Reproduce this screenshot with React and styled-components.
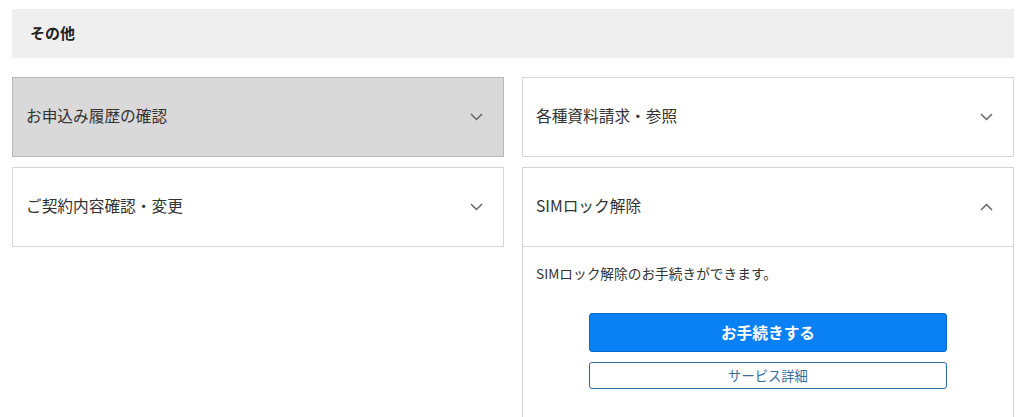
import React from 'react';
import styled, { createGlobalStyle } from 'styled-components';

const GlobalStyle = createGlobalStyle`
  body {
    margin: 0;
    background: #fff;
    font-family: "Noto Sans CJK JP", "Liberation Sans", sans-serif;
    color: #333;
  }
`;

const Page = styled.div`
  padding: 9px 10px 0 12px;
`;

const SectionHead = styled.h2`
  margin: 0;
  height: 49px;
  box-sizing: border-box;
  display: flex;
  align-items: center;
  padding: 0 18px 3px;
  background: #efefef;
  font-size: 15px;
  font-weight: 700;
  color: #222;
`;

const Grid = styled.div`
  margin-top: 19px;
  display: grid;
  grid-template-columns: 1fr 1fr;
  column-gap: 18px;
  row-gap: 10px;
  align-items: start;
`;

const Card = styled.div`
  border: 1px solid ${(p) => (p.active ? '#b8b8b8' : '#d6d6d6')};
  background: ${(p) => (p.active ? '#d9d9d9' : '#fff')};
`;

const CardHead = styled.div`
  height: 75px;
  display: flex;
  align-items: center;
  justify-content: space-between;
  padding: 0 20px 3px 13px;
  font-size: 15.7px;
  color: #333;
  border-bottom: ${(p) => (p.open ? '1px solid #d6d6d6' : 'none')};

  svg {
    margin-top: 3px;
  }
`;

const Body = styled.div`
  padding: 16px 13px 40px;
  font-size: 13.7px;
`;

const Actions = styled.div`
  margin-top: 30px;
  display: flex;
  flex-direction: column;
  align-items: center;
  gap: 10px;
`;

const Button = styled.button`
  width: 358px;
  height: ${(p) => (p.primary ? '39px' : '27px')};
  border-radius: 3px;
  border: 1px solid ${(p) => (p.primary ? '#0568cc' : '#2c6a9e')};
  background: ${(p) => (p.primary ? '#0a80f5' : '#fff')};
  color: ${(p) => (p.primary ? '#fff' : '#3b6d9c')};
  font-family: inherit;
  font-size: ${(p) => (p.primary ? '15.7px' : '13.3px')};
  font-weight: ${(p) => (p.primary ? 700 : 400)};
  padding: 0;
  cursor: pointer;
`;

const Chevron = ({ up }) => (
  <svg width="13" height="8" viewBox="0 0 13 8">
    <polyline
      points={up ? '1,7 6.5,1.5 12,7' : '1,1 6.5,6.5 12,1'}
      fill="none"
      stroke="#666"
      strokeWidth="1.5"
    />
  </svg>
);

const Item = ({ label, active, open, children }) => (
  <Card active={active}>
    <CardHead open={open}>
      {label}
      <Chevron up={open} />
    </CardHead>
    {open && children}
  </Card>
);

export default function App() {
  return (
    <Page>
      <GlobalStyle />
      <SectionHead>その他</SectionHead>
      <Grid>
        <Item label="お申込み履歴の確認" active />
        <Item label="各種資料請求・参照" />
        <Item label="ご契約内容確認・変更" />
        <Item label="SIMロック解除" open>
          <Body>
            SIMロック解除のお手続きができます。
            <Actions>
              <Button primary>お手続きする</Button>
              <Button>サービス詳細</Button>
            </Actions>
          </Body>
        </Item>
      </Grid>
    </Page>
  );
}
